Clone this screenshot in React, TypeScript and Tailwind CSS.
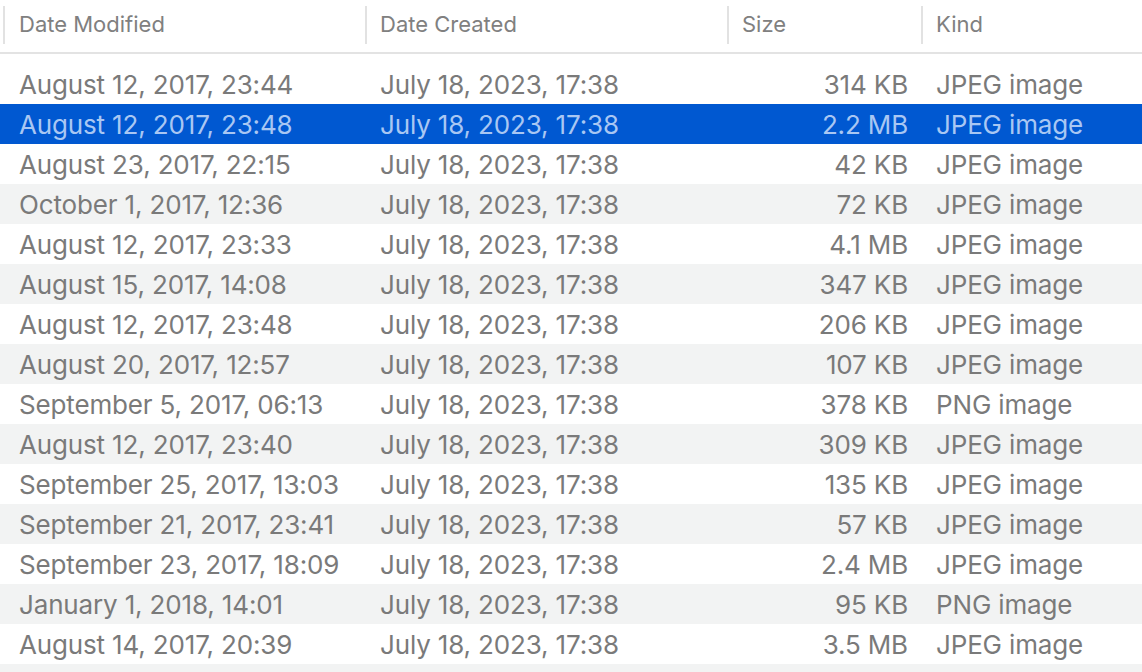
import React from "react";

type Row = { modified: string; size: string; kind: string };

const ROWS: Row[] = [
  { modified: "August 12, 2017, 23:44", size: "314 KB", kind: "JPEG image" },
  { modified: "August 12, 2017, 23:48", size: "2.2 MB", kind: "JPEG image" },
  { modified: "August 23, 2017, 22:15", size: "42 KB", kind: "JPEG image" },
  { modified: "October 1, 2017, 12:36", size: "72 KB", kind: "JPEG image" },
  { modified: "August 12, 2017, 23:33", size: "4.1 MB", kind: "JPEG image" },
  { modified: "August 15, 2017, 14:08", size: "347 KB", kind: "JPEG image" },
  { modified: "August 12, 2017, 23:48", size: "206 KB", kind: "JPEG image" },
  { modified: "August 20, 2017, 12:57", size: "107 KB", kind: "JPEG image" },
  { modified: "September 5, 2017, 06:13", size: "378 KB", kind: "PNG image" },
  { modified: "August 12, 2017, 23:40", size: "309 KB", kind: "JPEG image" },
  { modified: "September 25, 2017, 13:03", size: "135 KB", kind: "JPEG image" },
  { modified: "September 21, 2017, 23:41", size: "57 KB", kind: "JPEG image" },
  { modified: "September 23, 2017, 18:09", size: "2.4 MB", kind: "JPEG image" },
  { modified: "January 1, 2018, 14:01", size: "95 KB", kind: "PNG image" },
  { modified: "August 14, 2017, 20:39", size: "3.5 MB", kind: "JPEG image" },
];

const SELECTED = 1;

// header cell: thin divider on the left, label centred in the top 49px
const HeaderCell: React.FC<{ label: string; className: string; pad?: string }> = ({ label, className, pad = "pl-[13px]" }) => (
  <div className={`flex items-start ${className}`}>
    <div className="w-[2px] h-[38px] mt-[6px] bg-[#e2e2e2] shrink-0" />
    <div className={`flex items-center h-[49px] ${pad}`}>{label}</div>
  </div>
);

export default function App() {
  return (
    <div
      className="w-[1142px] h-[672px] overflow-hidden bg-white select-none"
      style={{ fontFamily: "Inter, 'Liberation Sans', sans-serif" }}
    >
      {/* column headers */}
      <div className="flex h-[54px] border-b-2 border-[#e3e3e3] text-[22px] text-[#808080]">
        <HeaderCell label="Date Modified" className="w-[365px] pl-[3px]" pad="pl-[14px]" />
        <HeaderCell label="Date Created" className="w-[362px]" />
        <HeaderCell label="Size" className="w-[194px]" />
        <HeaderCell label="Kind" className="flex-1" />
      </div>

      {/* rows */}
      <div className="pt-[10px] text-[26px] tracking-[-0.15px]">
        {[...ROWS, null].map((row, i) => {
          const sel = i === SELECTED;
          return (
            <div
              key={i}
              className={`flex items-center h-[40px] ${
                sel ? "bg-[#0058d1] text-[#a9c7f3]" : i % 2 === 1 ? "bg-[#f2f3f3] text-[#7a7a7a]" : "bg-white text-[#7a7a7a]"
              }`}
            >
              {row && (
                <>
                  <div className="w-[365px] pl-[19px] whitespace-nowrap">{row.modified}</div>
                  <div className="w-[362px] pl-[15px] whitespace-nowrap">July 18, 2023, 17:38</div>
                  <div className="w-[194px] pr-[13px] text-right whitespace-nowrap">{row.size}</div>
                  <div className="flex-1 pl-[15px] whitespace-nowrap">{row.kind}</div>
                </>
              )}
            </div>
          );
        })}
      </div>
    </div>
  );
}
